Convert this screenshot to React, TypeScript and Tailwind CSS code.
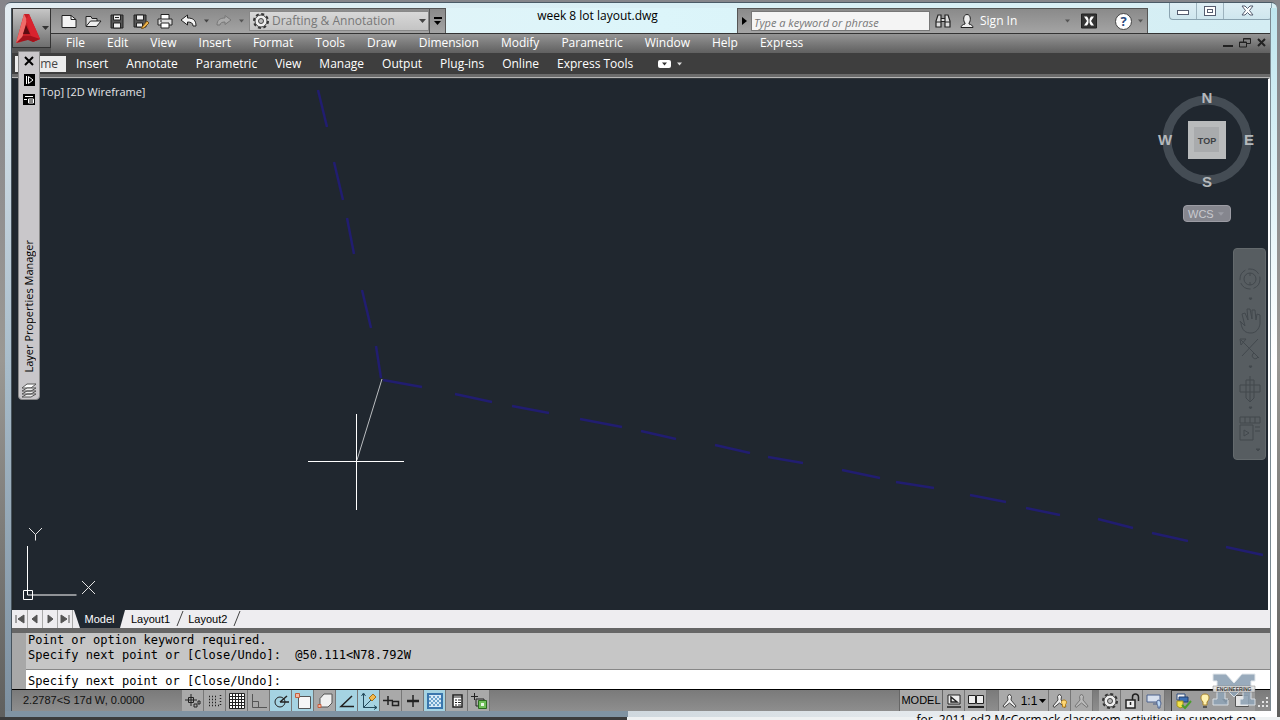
import type { ReactNode } from "react";

const menus = [
  "File",
  "Edit",
  "View",
  "Insert",
  "Format",
  "Tools",
  "Draw",
  "Dimension",
  "Modify",
  "Parametric",
  "Window",
  "Help",
  "Express",
];

const ribbonTabs = [
  "Insert",
  "Annotate",
  "Parametric",
  "View",
  "Manage",
  "Output",
  "Plug-ins",
  "Online",
  "Express Tools",
];

// dashes of the two lot lines, in drawing coordinates
const dashes = [
  [318, 90, 327, 127],
  [334, 162, 343, 200],
  [347, 218, 354, 254],
  [362, 290, 371, 328],
  [376, 346, 381, 378],
  [383, 380, 422, 387],
  [455, 394, 492, 402],
  [512, 406, 549, 413],
  [580, 419, 622, 427],
  [641, 431, 676, 439],
  [715, 445, 750, 453],
  [768, 457, 803, 463],
  [842, 470, 880, 478],
  [896, 482, 934, 488],
  [970, 495, 1006, 502],
  [1026, 508, 1060, 515],
  [1098, 519, 1133, 528],
  [1152, 533, 1188, 541],
  [1226, 547, 1263, 555],
];

type IconProps = { children: ReactNode; size?: number; className?: string };

function Icon({ children, size = 18, className }: IconProps) {
  return (
    <svg
      width={size}
      height={size}
      viewBox="0 0 18 18"
      fill="none"
      stroke="#222"
      className={className}
      aria-hidden="true"
    >
      {children}
    </svg>
  );
}

function Caret({ className = "text-[#222]" }: { className?: string }) {
  return (
    <svg width="7" height="4" viewBox="0 0 7 4" className={className} aria-hidden="true">
      <path d="M0 0h7L3.500 4z" fill="currentColor" />
    </svg>
  );
}

function GearIcon({ size = 18 }: { size?: number }) {
  return (
    <Icon size={size}>
      <circle cx="9" cy="9" r="7" stroke="#333" strokeWidth="2" strokeDasharray="3 2.500" />
      <circle cx="9" cy="9" r="6" fill="#eee" stroke="#444" />
      <circle cx="9" cy="9" r="2.500" fill="#bbb" stroke="#444" />
    </Icon>
  );
}

function QuickAccess() {
  return (
    <div className="flex h-[25px] shrink-0 items-center border-t border-r border-[#555] bg-linear-to-b from-[#8a8a8a] to-[#a4a4a4]">
      <div className="flex w-[198px] items-center gap-1.5 pl-[9px]">
        <button aria-label="New">
          <Icon>
            <path d="M2 3.500h9l5 4v8H2z" fill="#f4f4f4" />
            <path d="M11 3.500v4h5" />
          </Icon>
        </button>
        <button aria-label="Open">
          <Icon>
            <path d="M2 14V4.500h5l1 2h5V9" fill="#ddd" />
            <path d="M2 14.500 6.500 9H17l-4.500 5.500z" fill="#eee" />
          </Icon>
        </button>
        <button aria-label="Save">
          <Icon>
            <path d="M3 3h12v13H3z" fill="#555" />
            <path d="M5.500 3h7v5h-7zM5.500 11h7v5h-7z" fill="#eee" />
            <path d="M7 5.500h4" />
          </Icon>
        </button>
        <button aria-label="Save As">
          <Icon>
            <path d="M2 3h12v12H2z" fill="#555" />
            <path d="M4.500 3h7v5h-7zM4.500 11h6v4h-6z" fill="#eee" />
            <path d="m10 15 5-6 2 2-5 5-2.500.5z" fill="#f0b64a" stroke="#765018" />
          </Icon>
        </button>
        <button aria-label="Plot">
          <Icon>
            <path d="M5 7V2.500h8V7" fill="#fff" />
            <path d="M2 7h14v6H2z" fill="#ddd" />
            <path d="M5 11h8v5H5z" fill="#fff" />
            <path d="M4 9h2" />
          </Icon>
        </button>
        <button aria-label="Undo" className="flex items-center gap-1.5">
          <Icon>
            <path d="M1 8 7.500 3v3C13 6 16 8 16 14h-3c0-3-2-4-5.500-4v3z" fill="#f4f4f4" />
          </Icon>
          <Caret className="w-[5px] text-[#444]" />
        </button>
        <button aria-label="Redo" className="flex items-center gap-1.5">
          <Icon>
            <path
              d="m16 8-6-4.500V6C5 6 2 8 2 13h3c0-2 2-3 5-3v2.500z"
              fill="#aaa"
              stroke="#777"
            />
          </Icon>
          <Caret className="w-[5px] text-[#555]" />
        </button>
      </div>
      <button className="flex h-5 w-[180px] items-center gap-0.5 border border-[#888] bg-linear-to-b from-[#d8d8d8] to-[#c4c4c4] px-0.5 text-[#777]">
        <GearIcon size={18} />
        <span className="flex-1 text-left whitespace-nowrap">Drafting &amp; Annotation</span>
        <Caret className="text-[#444]" />
      </button>
      <button
        aria-label="Customize Quick Access Toolbar"
        className="flex h-full w-4 flex-col items-center justify-center gap-0.5 border-l border-[#555]"
      >
        <span className="h-0.5 w-2 bg-black" />
        <Caret className="text-black" />
      </button>
    </div>
  );
}

function InfoCenter() {
  return (
    <div className="flex h-[25px] w-[411px] shrink-0 items-center border border-b-0 border-[#555] bg-linear-to-b from-[#8a8a8a] to-[#a4a4a4]">
      <button aria-label="Collapse search" className="flex w-[13px] justify-center">
        <svg width="5" height="8" viewBox="0 0 5 8" aria-hidden="true">
          <path d="M0 0v8l5-4z" />
        </svg>
      </button>
      <input
        aria-label="Search"
        placeholder="Type a keyword or phrase"
        className="h-5 w-[179px] border border-[#777] bg-[#f4f4f4] px-0.5 pt-0.5 text-[11px] italic placeholder:text-[#777]"
      />
      <button aria-label="Search" className="ml-1">
        <Icon>
          <path
            d="M2 15V9l2-6h3v12zM11 15V3h3l2 6v6zM7 6.500h4v3H7zM2 10h5M11 10h5"
            fill="#ddd"
            strokeWidth="1.200"
          />
        </Icon>
      </button>
      <button className="ml-1.5 flex items-center gap-1 text-white">
        <Icon>
          <path
            d="M3 15.500c0-2 2-3 4-3.500v-1C5 9 5 2.500 9 2.500s4 6.500 2 8.500v1c2 .5 4 1.500 4 3.500z"
            fill="#eee"
          />
        </Icon>
        Sign In
      </button>
      <button aria-label="Sign in options" className="ml-auto">
        <Caret className="w-[5px] text-[#555]" />
      </button>
      <button aria-label="Exchange" className="ml-2.5">
        <Icon>
          <path d="M1.500 2h15v14h-15z" fill="#333" />
          <path
            d="M4 4.500h3l2 3 2-3h3L11 9l3 4.500h-3l-2-3-2 3H4L7 9z"
            fill="#fff"
            stroke="none"
          />
          <path d="M9 2v14" stroke="#333" />
        </Icon>
      </button>
      <button aria-label="Help" className="mr-1 ml-[17px] flex items-center gap-1.5">
        <span className="flex size-[17px] items-center justify-center rounded-full border border-[#444] bg-white text-[13px] leading-4 font-bold text-[#2a4a80]">
          ?
        </span>
        <Caret className="w-[5px] text-[#555]" />
      </button>
    </div>
  );
}

function WindowControls() {
  return (
    <div className="-mt-1.5 -mr-0.5 ml-[21px] flex h-[18px] w-[103px] shrink-0 rounded-b border border-t-0 border-[#8aa3b0] bg-linear-to-b from-[#dfeff5] to-[#cfe6ee]">
      <button
        aria-label="Minimize"
        className="flex flex-1 items-center justify-center border-r border-[#9db3be]"
      >
        <span className="mt-1 h-[5px] w-3 border border-[#555d70] bg-white" />
      </button>
      <button
        aria-label="Restore"
        className="flex flex-1 items-center justify-center border-r border-[#9db3be]"
      >
        <span className="flex h-2.5 w-3 items-center justify-center border border-[#555d70] bg-white">
          <span className="h-1 w-1.5 border border-[#555d70]" />
        </span>
      </button>
      <button aria-label="Close" className="flex w-[47px] items-center justify-center">
        <svg width="13" height="11" viewBox="0 0 13 11" aria-hidden="true">
          <path
            d="M1 1h3l2.500 2.500L9 1h3L8.500 5.500 12 10H9L6.500 7.500 4 10H1l3.500-4.500z"
            fill="#fff"
            stroke="#555d70"
          />
        </svg>
      </button>
    </div>
  );
}

function Header() {
  return (
    <header className="flex bg-[#707070] text-[12px]">
      <div className="h-[45px] w-[39px] shrink-0 bg-[#555]">
        <button
          aria-label="Application menu"
          className="flex h-10 w-[39px] items-center justify-center border border-[#333] bg-linear-to-b from-[#c6c6c6] to-[#6f6f6f]"
        >
          <svg width="27" height="34" viewBox="0 0 27 34" aria-hidden="true">
            <path d="M9 3h5l11 25-7 3-4-6-6 2-2 4-5 1z" fill="#c41e26" />
            <path d="M9 3 1 32l5-1L12 9z" fill="#ef6a68" />
            <path d="M14 3l11 25-7 3L11 9z" fill="#d9232e" />
            <path d="m8 23 3-9 4 9z" fill="#5c0c12" />
            <path d="M1 32l7-7h8l9 3-7 3-5-2z" fill="#a3121b" />
          </svg>
          <Caret className="text-[#333]" />
        </button>
      </div>
      <div className="flex min-w-0 flex-1 flex-col">
        <div className="flex h-[25px] items-start bg-linear-to-r from-[#e6f2f5] via-[#dcf5fa] to-[#d4edf3]">
          <QuickAccess />
          <h1 className="min-w-0 flex-1 truncate pl-3 text-center leading-4 text-black">
            week 8 lot layout.dwg
          </h1>
          <InfoCenter />
          <WindowControls />
        </div>
        <nav className="flex h-5 items-center border-t border-[#333] bg-linear-to-b from-[#959595] to-[#606060] pb-0.5 pl-1 text-white">
          {menus.map((m) => (
            <button key={m} className="px-[11px] leading-4">
              {m}
            </button>
          ))}
          <div className="ml-auto flex items-center gap-1.5 pr-1">
            <button aria-label="Minimize drawing">
              <svg width="10" height="11" viewBox="0 0 10 11" aria-hidden="true">
                <path d="M0 8h10v2H0z" fill="#222" />
              </svg>
            </button>
            <button aria-label="Restore drawing">
              <svg width="12" height="11" viewBox="0 0 12 11" fill="none" aria-hidden="true">
                <path d="M4.500 5V1.500h7v5H8M.5 5h7v5h-7zM.5 5.500h7M4.500 2h7" stroke="#222" />
              </svg>
            </button>
            <button aria-label="Close drawing">
              <svg width="9" height="9" viewBox="0 0 9 9" aria-hidden="true">
                <path d="m1 1 7 7M8 1 1 8" stroke="#222" strokeWidth="2" />
              </svg>
            </button>
          </div>
        </nav>
      </div>
    </header>
  );
}

function Ribbon() {
  return (
    <div className="border-b border-[#b5b5b5] bg-[#6b6b6b] pb-[3px]">
      <nav className="flex h-[21px] items-center bg-[#3e3e3e] pl-[3px] text-[12px] text-white">
        <button className="mr-px h-4 w-[51px] bg-[#ececec] pr-2 text-right leading-4 text-[#444]">
          Home
        </button>
        {ribbonTabs.map((t) => (
          <button key={t} className="px-[9px] leading-4">
            {t}
          </button>
        ))}
        <button aria-label="Ribbon display" className="ml-4 flex items-center gap-1.5">
          <span className="flex h-2 w-[13px] items-center justify-center rounded-xs bg-white">
            <Caret className="w-[5px] text-[#333]" />
          </span>
          <Caret className="w-[5px] text-[#ddd]" />
        </button>
      </nav>
    </div>
  );
}

function LayerPalette() {
  return (
    <aside className="absolute top-12 left-[13px] flex h-[349px] w-[22px] flex-col items-center rounded-b border border-[#888] bg-[#c9c7ca] pt-1">
      <button aria-label="Close palette">
        <svg width="10" height="10" viewBox="0 0 10 10" aria-hidden="true">
          <path d="m1 1 8 8M9 1 1 9" stroke="#000" strokeWidth="2" />
        </svg>
      </button>
      <button aria-label="Auto-hide" className="mt-2">
        <svg width="11" height="12" viewBox="0 0 11 12" aria-hidden="true">
          <path d="M0 0h11v12H0z" />
          <path d="M2.500 2v8M4.500 2.500v7L9 6z" stroke="#fff" fill="none" />
        </svg>
      </button>
      <button aria-label="Palette properties" className="mt-2">
        <svg width="12" height="11" viewBox="0 0 12 11" aria-hidden="true">
          <path d="M0 0h12v11H0z" />
          <path d="M2 2.500h8M5.500 5h5v4h-5zM5.500 7h5M1 5.500h3" stroke="#fff" fill="none" />
        </svg>
      </button>
      <span className="mt-auto rotate-180 text-[11px] leading-4 whitespace-nowrap text-black [writing-mode:vertical-rl]">
        Layer Properties Manager
      </span>
      <Icon className="mt-2">
        <path d="m2 7 5-4h9l-5 4z" fill="#fff" stroke="#555" />
        <path d="m2 10 5-3h9l-5 3zM2 13l5-3h9l-5 3zM2 16l5-3h9l-5 3z" fill="#eee" stroke="#555" />
      </Icon>
    </aside>
  );
}

function ViewCube() {
  return (
    <div className="absolute top-[10px] right-[9px] flex w-[104px] flex-col items-center">
      <svg
        width="104"
        height="104"
        viewBox="0 0 104 104"
        fontFamily="'Liberation Sans', sans-serif"
        fontWeight="bold"
        fontSize="15"
        textAnchor="middle"
        fill="#b4b8bb"
      >
        <circle cx="52" cy="51" r="40" fill="none" stroke="#444c54" strokeWidth="9" />
        <path d="M33 32h38v38H33z" fill="#b9bbbc" />
        <path d="M39 38h25v25H39z" fill="#a9abad" />
        <text x="52" y="14">
          N
        </text>
        <text x="52" y="98">
          S
        </text>
        <text x="10" y="56">
          W
        </text>
        <text x="94" y="56">
          E
        </text>
        <text x="52" y="55" fontSize="9" fill="#3d4144">
          TOP
        </text>
      </svg>
      <button className="mt-3 flex h-[17px] w-12 items-center justify-between rounded border border-[#9c9ca4] bg-[#85868e] pr-1.5 pl-1 font-['Liberation_Sans',sans-serif] text-[11px] leading-4 text-[#c9cacf]">
        WCS
        <Caret className="w-[6px] text-[#9b9ca4]" />
      </button>
    </div>
  );
}

function NavBar() {
  return (
    <div className="absolute top-[169px] right-[2px] flex h-[212px] w-[33px] flex-col items-center rounded-sm border border-[#646a6d] bg-[#575d61] pt-4">
      <svg
        width="28"
        height="190"
        viewBox="0 0 28 190"
        fill="none"
        stroke="#42484d"
        aria-hidden="true"
      >
        <circle cx="14" cy="14" r="10" strokeDasharray="12 3" />
        <circle cx="14" cy="14" r="6" />
        <path d="M14 8v3M14 17v3" />
        <path d="M5 58c1 8 5 10 10 10s8-4 9-9V50l-3-1-1 6-1-10h-3v9l-2-10h-3l1 11-3-7-3 1 3 12-5-5z" />
        <path d="m5 75 18 18M22 74 6 91M4 74h6l-5 6zM18 88a3 3 0 1 0 4 4" />
        <path d="M14 111v26M10 115v18l4 4 4-4v-18zM4 120h20v7H4z" />
        <path d="M4 152h20v6H4zM4 160h13v15H4zM9 152v6M14 152v6M19 152v6M8 165l5 3-5 3zM19 162h5M19 166h5" />
        <path d="M13 33h3l-1.500 2zM13 101h3l-1.500 2zM13 142h3l-1.500 2zM20 184h4l-2 2z" fill="#42484d" />
      </svg>
    </div>
  );
}

function DrawingArea() {
  return (
    <main className="relative min-h-0 flex-1 border-t border-r-2 border-l-2 border-t-[#33383c] border-r-white border-l-[#20262a] bg-[#20272f]">
      <svg
        className="absolute inset-0 h-full w-full"
        viewBox="14 79 1254 531"
        preserveAspectRatio="xMinYMin slice"
        fill="none"
        aria-label="Lot layout drawing"
      >
        {dashes.map(([x1, y1, x2, y2]) => (
          <line
            key={`${x1}-${y1}`}
            x1={x1}
            y1={y1}
            x2={x2}
            y2={y2}
            stroke="#211d70"
            strokeWidth="2.500"
          />
        ))}
        <path d="M382 379 357 460" stroke="#b9bcbf" />
        <path d="M308 461.500h96M356.500 414v96" stroke="#fff" />
        <path d="M27.500 546v49h49M23.500 590.500h9v9h-9z" stroke="#fff" />
        <path d="m29 528 6.500 6.500L42 528M35.500 534.500v6M82 581l13 13M95 581l-13 13" stroke="#e4e4e4" />
      </svg>
      <div className="absolute top-[5px] left-[27px] text-[11px] leading-4 text-[#e4e6e8]">
        Top] [2D Wireframe]
      </div>
      <ViewCube />
      <NavBar />
    </main>
  );
}

function LayoutTabs() {
  return (
    <div className="flex h-[18px] items-stretch bg-[#eeedf0] pl-px font-['Liberation_Sans',sans-serif] text-[12px] leading-4 text-black">
      {[
        ["First", "M2 2v8M10 2v8L4 6z"],
        ["Previous", "M8 2v8L3 6z"],
        ["Next", "M4 2v8l5-4z"],
        ["Last", "M10 2v8M2 2v8l6-4z"],
      ].map(([label, d]) => (
        <button
          key={label}
          aria-label={label}
          className="flex w-[15px] items-center justify-center border-r border-[#aaa]"
        >
          <svg width="12" height="12" viewBox="0 0 12 12" aria-hidden="true">
            <path d={d} fill="#555" stroke="#555" />
          </svg>
        </button>
      ))}
      <button className="ml-px w-[51px] bg-[#20272f] text-[11px] text-white [clip-path:polygon(0_0,100%_0,calc(100%-5px)_100%,6px_100%)]">
        Model
      </button>
      <button className="pl-1.5 text-[11px]">Layout1</button>
      <svg width="8" height="18" viewBox="0 0 8 18" className="ml-1.5" aria-hidden="true">
        <path d="M7 1 1 16" stroke="#444" />
      </svg>
      <button className="pl-1 text-[11px]">Layout2</button>
      <svg width="8" height="18" viewBox="0 0 8 18" className="ml-1.5" aria-hidden="true">
        <path d="M7 1 1 16" stroke="#444" />
      </svg>
    </div>
  );
}

function CommandLine() {
  return (
    <section className="flex border-t-[5px] border-[#666] bg-[#a8a8a8] font-['DejaVu_Sans_Mono',monospace] text-[12px] text-black">
      <div className="w-[14px] shrink-0 pt-1">
        <div className="h-[5px] w-3 bg-[radial-gradient(#333_35%,transparent_40%)] bg-size-[2px_2px]" />
      </div>
      <div className="min-w-0 flex-1">
        <div className="h-[37px] border-b border-[#888] bg-[#c6c6c6] pl-0.5 leading-[15px] whitespace-pre">
          <p>Point or option keyword required.</p>
          <p>Specify next point or [Close/Undo]:  @50.111&lt;N78.792W</p>
        </div>
        <label className="flex h-[19px] items-center bg-white pt-0.5 pl-0.5 leading-4 whitespace-nowrap">
          Specify next point or [Close/Undo]:
          <input className="min-w-0 flex-1 outline-none" />
        </label>
      </div>
    </section>
  );
}

const toggles: { label: string; on?: boolean; art: ReactNode }[] = [
  {
    label: "Infer Constraints",
    art: (
      <path d="M7 2v12M1 8h12M4.500 5.500h5v5h-5zM10 12h3v3h-3zM14 9h2v3h-2z" />
    ),
  },
  {
    label: "Snap Mode",
    art: (
      <path
        d="M3 4.500h9M3 7.500h9M3 10.500h9M3 13.500h12M14.500 3v11"
        strokeDasharray="1 2"
        strokeWidth="1.500"
      />
    ),
  },
  {
    label: "Grid Display",
    art: (
      <>
        <path d="M1.500 1.500h15v15h-15z" fill="#fff" />
        <path d="M4.500 1v16M7.500 1v16M10.500 1v16M13.500 1v16M1 4.500h16M1 7.500h16M1 10.500h16M1 13.500h16" />
      </>
    ),
  },
  {
    label: "Ortho Mode",
    art: <path d="M2.500 2v13.500H17M2.500 9.500h6v6" stroke="#555" />,
  },
  {
    label: "Polar Tracking",
    on: true,
    art: (
      <>
        <circle cx="8" cy="10" r="5" />
        <path d="M8 10h9M8 10l7-6" strokeWidth="1.500" />
      </>
    ),
  },
  {
    label: "Object Snap",
    on: true,
    art: (
      <>
        <path d="M4.500 4.500h12v12h-12z" fill="#f6f6f6" stroke="#555" />
        <path d="M1.500 1.500h4v4h-4z" fill="#f3b9a4" stroke="#c45e3c" />
      </>
    ),
  },
  {
    label: "3D Object Snap",
    art: (
      <>
        <path d="M4 6.500 8 2h8v9l-4 4H4z" fill="#f0f0f0" stroke="#555" />
        <path d="M2 12.500h3v3H2z" fill="#f3b9a4" stroke="#c45e3c" />
      </>
    ),
  },
  {
    label: "Object Snap Tracking",
    on: true,
    art: <path d="M14 4 3 14.500h13" strokeWidth="1.500" />,
  },
  {
    label: "Dynamic UCS",
    on: true,
    art: (
      <>
        <path d="M3.500 2v13.500H17M3.500 15.500 11 8M1.500 4l2-3 2 3M14 13.500l3 2-3 2" stroke="#234a5c" />
        <path d="m9 6 4-4 3 3-4 4z" fill="#f2b84b" stroke="#a0701c" />
      </>
    ),
  },
  {
    label: "Dynamic Input",
    art: <path d="M6 4v9M1 8.500h10M10.500 9.500h6v4h-6z" strokeWidth="1.500" />,
  },
  {
    label: "Lineweight",
    art: (
      <>
        <path d="M9 3v12" strokeWidth="1.500" />
        <path d="M3 9h12" strokeWidth="2.500" />
      </>
    ),
  },
  {
    label: "Transparency",
    on: true,
    art: (
      <>
        <path d="M2 2h14v14H2z" fill="#d7eaf7" stroke="#3a76ad" strokeWidth="2" />
        <path
          d="M3 5h12M3 9h12M3 13h12M5 7h10M5 11h10"
          stroke="#6da3cc"
          strokeWidth="2"
          strokeDasharray="2 2"
        />
      </>
    ),
  },
  {
    label: "Quick Properties",
    art: (
      <>
        <path d="M5 3h9v12H5z" fill="#fff" strokeWidth="1.500" />
        <path d="M5 5h9M7 8h2M10 8h3M7 10.500h2M10 10.500h3M7 13h2M10 13h3" />
      </>
    ),
  },
  {
    label: "Selection Cycling",
    art: (
      <>
        <path d="M4.500 1v7M1 4.500h7M6 7h8v7H6z" />
        <path d="M8.500 8.500h8v8h-8z" fill="#6fbf5a" stroke="#2c6b20" />
        <path d="M11 11h3v3h-3z" fill="#e8f6e4" stroke="none" />
      </>
    ),
  },
];

function StatusButton({ label, children }: { label: string; children: ReactNode }) {
  return (
    <button
      aria-label={label}
      className="flex h-full w-[22px] items-center justify-center border-r border-[#777] bg-[#a9a9a9]"
    >
      {children}
    </button>
  );
}

// compass-like figure used by the annotation buttons
function ScaleFigure({ color = "#eee" }: { color?: string }) {
  return (
    <path
      d="M8.500 2 6.500 4.500 7 8l-5 6 1 1.500L8.500 11l5.500 4.500 1-1.500-5-6 .5-3.500z"
      fill={color}
      stroke="#444"
    />
  );
}

function StatusBar() {
  return (
    <footer className="flex h-[22px] items-stretch border-t border-black bg-linear-to-b from-[#7a7a7a] to-[#8e8e8e] font-['Liberation_Sans',sans-serif] text-[12px] text-black">
      <div className="flex w-[170px] shrink-0 items-center pl-[11px] text-[11px] text-[#111]">
        2.2787&lt;S 17d W, 0.0000
      </div>
      {toggles.map((t) => (
        <button
          key={t.label}
          aria-label={t.label}
          aria-pressed={!!t.on}
          className={`flex w-[22px] shrink-0 items-center justify-center border-r border-[#777] ${
            t.on ? "bg-[#a5d3e2]" : "bg-[#a9a9a9]"
          }`}
        >
          <Icon>{t.art}</Icon>
        </button>
      ))}
      <div className="ml-auto flex items-stretch">
        <button className="w-11 border-x border-[#666] bg-[#a9a9a9] text-[11px]">MODEL</button>
        <StatusButton label="Quick View Layouts">
          <Icon>
            <path d="M3 3h12v9H3z" fill="#eee" />
            <path d="M6 5v5h6zM2 15h14" strokeWidth="1.500" />
          </Icon>
        </StatusButton>
        <StatusButton label="Quick View Drawings">
          <Icon>
            <path d="M1.500 3.500h7v8h-7zM9.500 3.500h7v8h-7z" fill="#eee" />
            <path d="M1 15h16" strokeWidth="2" />
          </Icon>
        </StatusButton>
        <button
          aria-label="Annotation scale"
          className="ml-[11px] flex w-[51px] items-center justify-center gap-0.5 border-x border-[#777] bg-[#a9a9a9]"
        >
          <Icon>
            <ScaleFigure />
          </Icon>
          1:1
          <Caret className="text-black" />
        </button>
        <StatusButton label="Annotation Visibility">
          <Icon>
            <ScaleFigure />
            <path d="M13 8c-3 0-3 3-1.500 4.500V15h3v-2.500C16 11 16 8 13 8z" fill="#ffd874" stroke="#b07f1c" />
          </Icon>
        </StatusButton>
        <StatusButton label="Auto Scale">
          <Icon className="opacity-50">
            <ScaleFigure color="#ccc" />
          </Icon>
        </StatusButton>
        <div className="ml-1.5 flex">
          <StatusButton label="Workspace Switching">
            <GearIcon />
          </StatusButton>
          <StatusButton label="Toolbar Lock">
            <Icon>
              <path d="M3 8h9v8H3z" fill="#eee" strokeWidth="1.500" />
              <path d="M9.500 8V5a3 3 0 0 1 6 0v4M7.500 10v3" strokeWidth="1.500" />
            </Icon>
          </StatusButton>
          <StatusButton label="Hardware Acceleration">
            <Icon>
              <path d="M2 3h13v7H2z" fill="#d7e0ee" stroke="#4a608c" />
              <path d="M8 12h4M13 8c-2 1-1 5 0 6v2h2v-2c1-1 2-5-2-6z" fill="#bcd8f5" stroke="#4a608c" />
            </Icon>
          </StatusButton>
        </div>
        <div className="ml-1.5 flex w-[84px] items-center gap-1 border-t border-l border-[#333] bg-[#9b9b9b] pl-0.5">
          <Icon>
            <path d="M3 2h8v6H3z" fill="#f4f4f4" stroke="#2b4a7d" />
            <path d="M5 5h9v5H5z" fill="#3b6fb5" stroke="#24406f" />
            <path d="M3 9h6v6l-3 1-3-2z" fill="#f3e34a" stroke="#a4941c" />
            <path d="m8 13 3 3 6-7" stroke="#4a9c2d" strokeWidth="2" />
          </Icon>
          <Icon>
            <path d="M9 2c-5 0-5 5-2 8v3h4v-3c3-3 3-8-2-8z" fill="#fff2b0" stroke="#a8842c" />
            <path d="M7 15h4" stroke="#555" strokeWidth="2" />
          </Icon>
          <button aria-label="Status bar menu" className="ml-1">
            <Caret className="text-black" />
          </button>
          <button aria-label="Clean Screen">
            <Icon>
              <path d="M2.500 3.500h13v11h-13z" fill="#e6e6e6" stroke="#555" />
            </Icon>
          </button>
        </div>
        <svg width="15" height="21" viewBox="0 0 15 21" fill="#e4e4e4" aria-hidden="true">
          <path d="M11 7h2v2h-2zM7 11h2v2H7zM11 11h2v2h-2zM3 15h2v2H3zM7 15h2v2H7zM11 15h2v2h-2z" />
        </svg>
      </div>
    </footer>
  );
}

function Watermark() {
  return (
    <svg
      className="absolute right-[21px] bottom-[10px] opacity-90"
      width="44"
      height="34"
      viewBox="0 0 44 34"
      aria-label="M Engineering"
    >
      <path
        d="M1 1h13l8 9 8-9h13v7h-4v18h4v6H28v-6h3V15l-9 9-9-9v11h3v6H1v-6h4V8H1z"
        fill="#8fa3b5"
        stroke="#dfe5ea"
      />
      <path d="M1 13h42v6H1z" fill="#e4e4e4" stroke="#777" strokeWidth=".5" />
      <text
        x="22"
        y="18"
        textAnchor="middle"
        fontSize="5"
        fontWeight="bold"
        fontFamily="'Liberation Sans', sans-serif"
        fill="#333"
      >
        ENGINEERING
      </text>
    </svg>
  );
}

export default function App() {
  return (
    <div className="relative flex h-screen flex-col overflow-hidden bg-linear-to-b from-[#85858a] via-[#9a9894] to-[#5f5f5d] pt-0.5 pr-[3px] pl-[5px] font-['Open_Sans','Noto_Sans',sans-serif]">
      <div className="relative flex min-h-0 flex-1 flex-col overflow-hidden rounded-t-md border-t border-[#4a5a66] bg-linear-to-r from-[#e3edf2] via-[#d8eff5] to-[#d9eff5]">
        <div className="mt-[5px] flex min-h-0 flex-1">
          <div className="w-[7px] shrink-0 border-r border-[#46525c] bg-linear-to-b from-[#e3edf2] via-[#a9bdcb] to-[#7d90a0]" />
          <div className="flex min-w-0 flex-1 flex-col">
            <Header />
            <Ribbon />
            <DrawingArea />
            <LayoutTabs />
            <CommandLine />
            <StatusBar />
          </div>
          <div className="w-[7px] shrink-0 border-l border-[#7b8a92] bg-linear-to-b from-[#bfe6ef] via-white to-white" />
        </div>
        <div className="flex h-1.5 shrink-0">
          <div className="w-[49%] bg-[#8093a2]" />
          <div className="flex-1 bg-linear-to-r from-[#cfd8de] to-white" />
        </div>
        <LayerPalette />
        <Watermark />
      </div>
      <div className="-mr-[3px] -ml-[5px] flex h-[3px] shrink-0">
        <div className="w-[49%] bg-[#3c3c3c]" />
        <div className="relative flex-1 bg-[#eef1f2] pr-6 text-right text-[12px] leading-[6px] text-black">
          for. 2011-ed2 McCormack classroom activities in support can
        </div>
      </div>
    </div>
  );
}
